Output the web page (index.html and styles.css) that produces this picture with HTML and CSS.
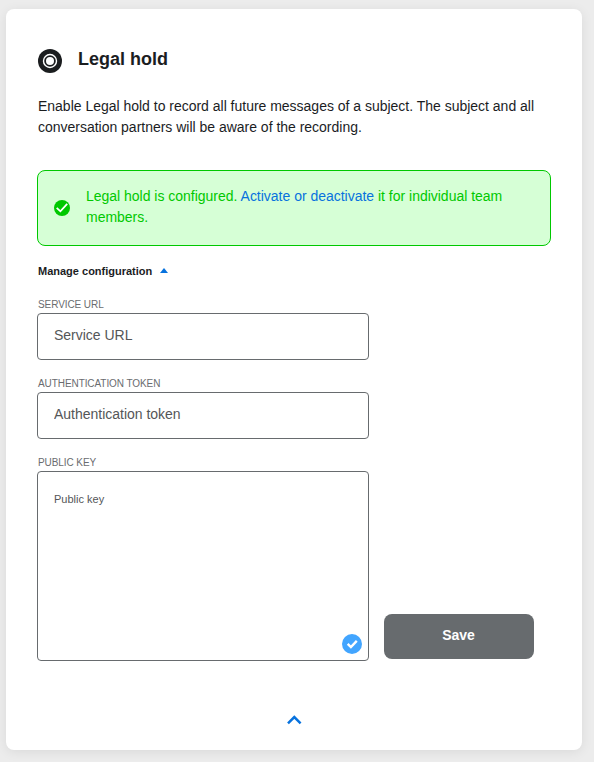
FILE: index.html
```html
<!DOCTYPE html>
<html lang="en">
<head>
<meta charset="utf-8">
<title>Legal hold</title>
<link rel="stylesheet" href="styles.css">
</head>
<body>
<main class="card">
  <header class="head">
    <svg class="head-icon" viewBox="0 0 24 24"><circle cx="12" cy="12" r="12" fill="#1b1d1f"/><circle cx="12" cy="12" r="6.500" fill="none" stroke="#fff" stroke-width="1.400"/><circle cx="12" cy="12" r="4" fill="#fff"/></svg>
    <h1>Legal hold</h1>
  </header>
  <p class="intro">Enable Legal hold to record all future messages of a subject. The subject and all conversation partners will be aware of the recording.</p>
  <div class="notice">
    <svg class="notice-icon" viewBox="0 0 16 16"><circle cx="8" cy="8" r="8" fill="#00c800"/><path d="M2.700 7.800l3.700 3.500 6.800-7.400" fill="none" stroke="#fff" stroke-width="1.800"/></svg>
    <p>Legal hold is configured. <a href="#">Activate or deactivate</a> it for individual team members.</p>
  </div>
  <div class="manage">Manage configuration <svg class="tri" viewBox="0 0 8 5"><path d="M0 5l4-5 4 5z" fill="#0772de"/></svg></div>
  <form class="form">
    <div class="fields">
      <label for="url">SERVICE URL</label>
      <input id="url" placeholder="Service URL">
      <label for="token">AUTHENTICATION TOKEN</label>
      <input id="token" placeholder="Authentication token">
      <label for="key">PUBLIC KEY</label>
      <div class="key">
        <textarea id="key" placeholder="Public key"></textarea>
        <svg class="badge" viewBox="0 0 20 20"><circle cx="10" cy="10" r="10" fill="#42a5ff"/><path d="M5.700 9.900l3.200 3.200 5.900-6.200" fill="none" stroke="#fff" stroke-width="2.400"/></svg>
      </div>
    </div>
    <button type="button">Save</button>
  </form>
  <svg class="collapse" viewBox="0 0 16 10"><path d="M2 8.300L8.300 2l6.300 6.300" fill="none" stroke="#0772de" stroke-width="2.500"/></svg>
</main>
</body>
</html>
```
FILE: styles.css
```css
* { box-sizing: border-box; }
body { margin: 0; padding: 9px 12px 12px 6px; background: #ececec; font-family: "Liberation Sans", sans-serif; color: #1b1d1f; }
.card { display: flex; flex-direction: column; height: 741px; padding: 38px 31px 0; background: #fff; border-radius: 8px; box-shadow: 0 2px 12px rgba(0,0,0,.08); }
.head { display: flex; gap: 16px; padding-left: 1px; height: 49px; }
.head-icon { width: 24px; height: 24px; margin-top: 2px; }
h1 { margin: 0; font-size: 18px; line-height: 24px; }
p { margin: 0; font-size: 14px; line-height: 21px; letter-spacing: -.013px; }
.intro { margin-left: 1px; width: 510px; height: 74px; }
.notice { display: flex; align-items: center; gap: 16px; height: 76px; padding: 0 16px; border: 1px solid #00c800; border-radius: 8px; background: #d6ffd6; color: #00c800; }
.notice-icon { width: 16px; height: 16px; flex: none; }
.notice p { padding-bottom: 2px; }
a { color: #0772de; text-decoration: none; }
.manage { display: flex; align-items: center; gap: 8px; margin: 18px 0 0 1px; font-size: 11px; line-height: 14px; font-weight: bold; }
.tri { width: 8px; height: 5px; margin-bottom: 2px; }
.form { display: flex; align-items: flex-end; gap: 15px; margin-top: 20px; }
.fields { width: 332px; display: flex; flex-direction: column; }
label { margin-left: 1px; height: 15px; padding-top: 1px; font-size: 10px; line-height: 12px; letter-spacing: -.08px; color: #6a6c6f; }
input, textarea { display: block; width: 100%; margin: 0; border: 1px solid #676b6e; border-radius: 4px; background: #fff; outline: 0; font-family: inherit; resize: none; }
input { height: 47px; padding: 0 16px 3px; font-size: 14px; letter-spacing: -.013px; margin-bottom: 17px; }
textarea { height: 190px; padding: 21px 16px; font-size: 11px; line-height: 13px; }
::placeholder { color: #545658; opacity: 1; }
.key { position: relative; }
.badge { position: absolute; right: 7px; bottom: 7px; width: 20px; height: 20px; }
button { width: 150px; height: 45px; margin-bottom: 2px; padding: 0 1px 3px 0; border: 0; border-radius: 8px; background: #676b6e; color: #fff; font: bold 14px "Liberation Sans", sans-serif; }
.collapse { width: 16px; height: 10px; margin: 54px auto 0; }
```
